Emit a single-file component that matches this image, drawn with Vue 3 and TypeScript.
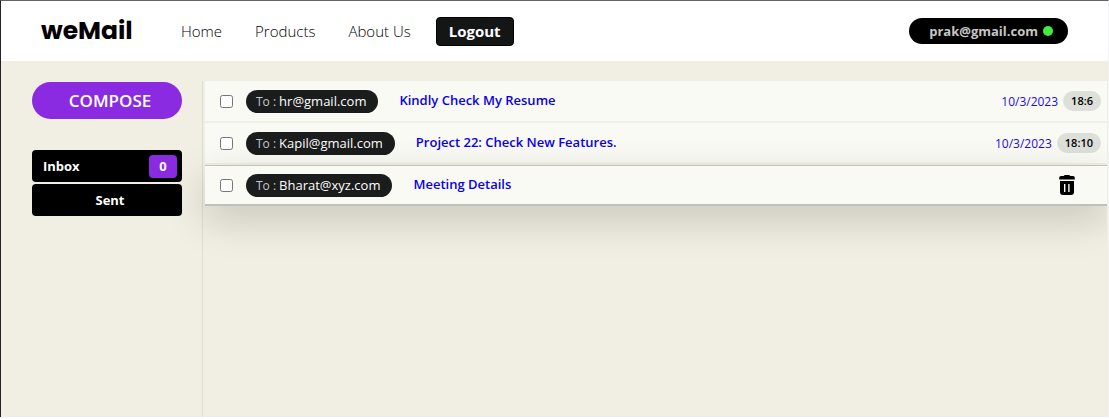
<script setup lang="ts">
import { ref } from 'vue'

interface Mail {
  id: number
  to: string
  subject: string
  date: string
  time: string
  active: boolean
}

const user = 'prak@gmail.com'
const inboxCount = 0
const links: string[] = ['Home', 'Products', 'About Us']
const selected = ref<number[]>([])
const mails = ref<Mail[]>([
  { id: 1, to: 'hr@gmail.com', subject: 'Kindly Check My Resume', date: '10/3/2023', time: '18:6', active: false },
  { id: 2, to: 'Kapil@gmail.com', subject: 'Project 22: Check New Features.', date: '10/3/2023', time: '18:10', active: false },
  { id: 3, to: 'Bharat@xyz.com', subject: 'Meeting Details', date: '10/3/2023', time: '18:12', active: true },
])

function remove(id: number): void {
  mails.value = mails.value.filter((m) => m.id !== id)
}
</script>

<template>
  <div class="app">
    <header class="topbar">
      <div class="logo">weMail</div>
      <nav class="nav">
        <a v-for="link in links" :key="link" href="#" class="nav-link">{{ link }}</a>
        <button type="button" class="logout">Logout</button>
      </nav>
      <div class="user"><span>{{ user }}</span><span class="dot"></span></div>
    </header>
    <div class="content">
      <aside class="sidebar">
        <button type="button" class="compose">COMPOSE</button>
        <div class="folders">
          <button type="button" class="folder inbox">
            <span>Inbox</span><span class="count">{{ inboxCount }}</span>
          </button>
          <button type="button" class="folder">Sent</button>
        </div>
      </aside>
      <main class="list">
        <div v-for="mail in mails" :key="mail.id" class="mail" :class="{ active: mail.active }">
          <input v-model="selected" type="checkbox" class="check" :value="mail.id" :aria-label="'Select ' + mail.subject" />
          <span class="to"><span class="to-label">To :</span>{{ mail.to }}</span>
          <a href="#" class="subject">{{ mail.subject }}</a>
          <button v-if="mail.active" type="button" class="trash" aria-label="Delete" @click="remove(mail.id)">
            <svg width="16" height="20" viewBox="0 0 16 20" aria-hidden="true">
              <path d="M4.6 1 5.8 0h4.4l1.2 1H14A1.8 1.8 0 0 1 15.8 2.8V4.6H.2V2.8A1.8 1.8 0 0 1 2 1Z" />
              <path fill-rule="evenodd" d="M1 6h14v11a3 3 0 0 1-3 3H4a3 3 0 0 1-3-3ZM5 9v8h1.4v-8ZM9.2 9v8h1.4v-8Z" />
            </svg>
          </button>
          <template v-else>
            <span class="date">{{ mail.date }}</span>
            <span class="time">{{ mail.time }}</span>
          </template>
        </div>
      </main>
    </div>
  </div>
</template>

<style>
body {
  background: #fff;
}
</style>

<style scoped>
.app {
  box-sizing: border-box;
  min-height: calc(100vh - 2px);
  display: flex;
  flex-direction: column;
  border-top: 1px solid #66636b;
  border-left: 1px solid #25222b;
  border-right: 1px solid #f3f3f6;
  background: #f1eee3;
  font-family: 'Segoe UI', 'Open Sans', 'Noto Sans', sans-serif;
  color: #000;
}
button {
  font-family: inherit;
  cursor: pointer;
  border: 0;
}
a {
  text-decoration: none;
}
.topbar {
  box-sizing: border-box;
  height: 60px;
  display: flex;
  align-items: center;
  padding: 0 40px;
  background: #fff;
}
.logo {
  width: 140px;
  font: 700 25px/36px Poppins, Inter, sans-serif;
}
.nav {
  display: flex;
  align-items: center;
  gap: 33px;
  flex: 1;
}
.nav-link {
  color: #000;
  font-size: 15px;
  font-weight: 300;
}
.logout {
  height: 29px;
  padding: 0 12px;
  margin-left: -8px;
  border: 1px solid #000;
  border-radius: 4px;
  background: #141615;
  color: #fff;
  font-size: 15px;
  font-weight: 700;
}
.user {
  box-sizing: border-box;
  height: 26px;
  display: flex;
  align-items: center;
  gap: 5px;
  padding: 0 15px 0 20px;
  border-radius: 13px;
  background: #000;
  color: #c6c6c6;
  font-size: 13px;
  font-weight: 700;
}
.dot {
  width: 10px;
  height: 10px;
  border-radius: 50%;
  background: #3ded40;
}
.content {
  flex: 1;
  display: flex;
  padding-top: 20px;
}
.sidebar {
  flex: none;
  width: 150px;
  padding: 1px 20px 0 31px;
}
.compose {
  display: block;
  width: 100%;
  height: 37px;
  padding: 0 0 0 6px;
  border-radius: 19px;
  background: #8a2be2;
  color: #fff;
  font-size: 17px;
  font-weight: 600;
}
.folders {
  display: grid;
  gap: 2px;
  margin-top: 31px;
}
.folder {
  display: flex;
  align-items: center;
  justify-content: center;
  height: 32px;
  padding: 0 5px 0 11px;
  border-radius: 4px;
  background: #000;
  color: #fff;
  font-size: 13px;
  font-weight: 700;
}
.inbox {
  justify-content: space-between;
}
.count {
  width: 28px;
  line-height: 23px;
  border-radius: 4px;
  background: #8a2be2;
  text-align: center;
}
.list {
  flex: 1;
  min-width: 0;
  display: flex;
  flex-direction: column;
  gap: 2px;
  padding: 0 1px 0 2px;
  border-left: 1px solid #dfdcd1;
}
.mail {
  box-sizing: border-box;
  height: 40px;
  display: flex;
  align-items: center;
  padding: 0 6px 0 15px;
  background: #f9faf4;
}
.active {
  border-top: 1px solid #c5c4bb;
  border-bottom: 1px solid #bfc1bd;
  box-shadow: 0 1px 0 #c1c1bc, 0 14px 40px rgba(0, 0, 0, 0.18);
  clip-path: inset(-60px 0 -80px -50px);
}
.check {
  width: 13px;
  height: 13px;
  margin: 0 13px 0 0;
}
.to {
  height: 23px;
  padding: 0 12px 0 10px;
  border-radius: 12px;
  background: #1b1c1c;
  color: #fff;
  font-size: 13px;
  font-weight: 500;
  line-height: 23px;
  white-space: nowrap;
}
.to-label {
  margin-right: 3px;
  color: #c4c9cc;
  font-size: 12px;
  font-weight: 400;
}
.subject {
  flex: 1;
  margin-left: 21px;
  padding-bottom: 2px;
  color: #0a00e6;
  font-size: 13px;
  font-weight: 600;
  line-height: 20px;
  white-space: nowrap;
}
.date {
  margin-right: 5px;
  color: #1b0af0;
  font-size: 12px;
}
.time {
  padding: 0 8px;
  border-radius: 10px;
  background: #dddfd9;
  font-size: 11px;
  font-weight: 600;
  line-height: 20px;
}
.trash {
  width: 16px;
  height: 20px;
  margin-right: 26px;
  padding: 0;
  background: none;
}
.trash svg {
  display: block;
}
</style>
